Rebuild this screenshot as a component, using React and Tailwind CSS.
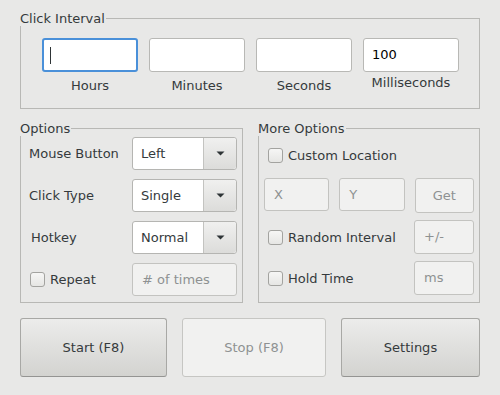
import React from "react";

function Frame({ title, className = "", children }) {
  return (
    <div className={"relative border border-[#b8b8b5] " + className}>
      <span className="absolute left-[-1px] top-[-8px] bg-[#e8e8e7] pr-[1px] leading-[15px] text-[#353a3c]">
        {title}
      </span>
      {children}
    </div>
  );
}

function Field({ label, children, labelClass = "mt-[6px]" }) {
  return (
    <div className="flex w-[96px] flex-col items-center">
      {children}
      <span className={"leading-[15px] " + labelClass}>{label}</span>
    </div>
  );
}

function Combo({ value }) {
  return (
    <div className="flex h-[33px] w-[105px] rounded-[3px] border border-[#b5b5b2] bg-white">
      <div className="flex flex-1 items-center pl-[8px]">{value}</div>
      <div className="flex w-[33px] items-center justify-center rounded-r-[3px] border-l border-[#c3c3c0] bg-gradient-to-b from-[#f0f0ef] to-[#dcdcda]">
        <svg width="9" height="5" viewBox="0 0 9 5">
          <polygon points="0.5,0.5 8.5,0.5 4.5,4.5" fill="#2e3436" />
        </svg>
      </div>
    </div>
  );
}

function Check({ label }) {
  return (
    <div className="flex items-center gap-[5px]">
      <div className="h-[15px] w-[15px] rounded-[3px] border border-[#a3a3a0] bg-gradient-to-b from-[#f6f6f5] to-[#e6e6e4]" />
      <span className="leading-[15px]">{label}</span>
    </div>
  );
}

function Dis({ text, className = "", center = false }) {
  return (
    <div
      className={
        "flex items-center rounded-[3px] border border-[#c3c3c0] bg-[#f1f1f0] text-[#8e9192] " +
        (center ? "justify-center " : "pl-[9px] ") +
        className
      }
    >
      {text}
    </div>
  );
}

export default function App() {
  return (
    <div className="h-[395px] w-[500px] overflow-hidden bg-[#e8e8e7] px-[20px] pt-[18px] font-['DejaVu_Sans',sans-serif] text-[13px] text-[#353a3c]">
      <Frame title="Click Interval" className="h-[91px] w-[460px] pl-[21px] pt-[19px]">
        <div className="flex gap-[11px]">
          <Field label="Hours">
            <div className="flex h-[34px] w-full items-center rounded-[3px] border-2 border-[#4a90d9] bg-white pl-[6px]">
              <div className="h-[17px] w-px bg-[#2e3436]" />
            </div>
          </Field>
          <Field label="Minutes">
            <div className="h-[34px] w-full rounded-[3px] border border-[#b8b8b5] bg-white" />
          </Field>
          <Field label="Seconds">
            <div className="h-[34px] w-full rounded-[3px] border border-[#b8b8b5] bg-white" />
          </Field>
          <Field label="Milliseconds" labelClass="mt-[3px]">
            <div className="flex h-[34px] w-full items-center rounded-[3px] border border-[#b8b8b5] bg-white pl-[8px] text-black">
              100
            </div>
          </Field>
        </div>
      </Frame>

      <div className="mt-[19px] flex gap-[15px]">
        <Frame title="Options" className="h-[175px] w-[223px] pt-[8px]">
          <div className="flex flex-col gap-[9px]">
            <div className="flex items-center pl-[8px]">
              <span className="w-[103px]">Mouse Button</span>
              <Combo value="Left" />
            </div>
            <div className="flex items-center pl-[8px]">
              <span className="w-[103px]">Click Type</span>
              <Combo value="Single" />
            </div>
            <div className="flex items-center pl-[8px]">
              <span className="w-[103px] pl-[2px]">Hotkey</span>
              <Combo value="Normal" />
            </div>
            <div className="flex items-center pl-[9px]">
              <div className="w-[102px]">
                <Check label="Repeat" />
              </div>
              <Dis text="# of times" className="h-[33px] w-[105px]" />
            </div>
          </div>
        </Frame>

        <Frame title="More Options" className="h-[175px] w-[222px] px-[5px] pt-[10px]">
          <div className="flex h-[33px] items-center pl-[4px]">
            <Check label="Custom Location" />
          </div>
          <div className="mt-[6px] flex items-start gap-[10px]">
            <Dis text="X" className="h-[33px] w-[66px]" />
            <Dis text="Y" className="h-[33px] w-[66px]" />
            <Dis text="Get" center className="h-[35px] w-[60px]" />
          </div>
          <div className="mt-[7px] flex h-[34px] items-center justify-between pl-[4px]">
            <Check label="Random Interval" />
            <Dis text="+/-" className="h-[34px] w-[60px]" />
          </div>
          <div className="mt-[7px] flex h-[34px] items-center justify-between pl-[4px]">
            <Check label="Hold Time" />
            <Dis text="ms" className="h-[34px] w-[60px]" />
          </div>
        </Frame>
      </div>

      <div className="mt-[15px] flex gap-[15px]">
        <div className="flex h-[59px] w-[147px] items-center justify-center rounded-[3px] border border-[#a8a8a5] border-b-[#949492] bg-gradient-to-b from-[#ececeb] to-[#d3d3d0]">
          Start (F8)
        </div>
        <div className="flex h-[59px] w-[144px] items-center justify-center rounded-[3px] border border-[#c6c6c3] bg-[#f1f1f0] text-[#8e9192]">
          Stop (F8)
        </div>
        <div className="flex h-[59px] w-[139px] items-center justify-center rounded-[3px] border border-[#a8a8a5] border-b-[#949492] bg-gradient-to-b from-[#ececeb] to-[#d3d3d0]">
          Settings
        </div>
      </div>
    </div>
  );
}
